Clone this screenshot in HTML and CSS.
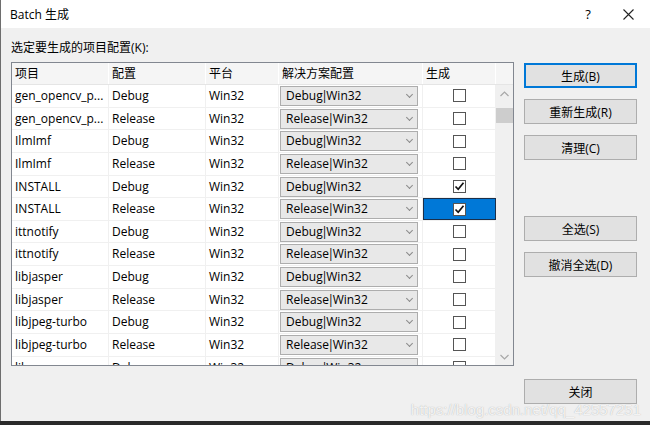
FILE: index.html
```html
<!DOCTYPE html>
<html>
<head>
<meta charset="utf-8">
<link rel="stylesheet" href="styles.css">
</head>
<body>
<div class="window">
  <div class="titlebar">
    <span class="title">Batch 生成</span>
    <span class="help">?</span>
    <span class="close-x"><svg width="11" height="11" viewBox="0 0 11 11"><path d="M0.5 0.5 L10.5 10.5 M10.5 0.5 L0.5 10.5" stroke="#222" stroke-width="1.1" fill="none"/></svg></span>
  </div>
  <div class="content">
    <div class="left">
      <div class="label">选定要生成的项目配置(K):</div>
      <div class="grid">
        <div class="hrow">
          <div class="hcell">项目</div>
          <div class="hcell">配置</div>
          <div class="hcell">平台</div>
          <div class="hcell">解决方案配置</div>
          <div class="hcell">生成</div>
          <div class="hcell blank"></div>
        </div>
        <div class="gbody">
          <div class="rows">
            <div class="row"><div class="cell">gen_opencv_p...</div><div class="cell">Debug</div><div class="cell">Win32</div><div class="cell cc"><div class="combo"><span>Debug<b class="pipe">|</b>Win32</span><i class="chev"></i></div></div><div class="cell ck"><span class="box"></span></div></div>
            <div class="row"><div class="cell">gen_opencv_p...</div><div class="cell">Release</div><div class="cell">Win32</div><div class="cell cc"><div class="combo"><span>Release<b class="pipe">|</b>Win32</span><i class="chev"></i></div></div><div class="cell ck"><span class="box"></span></div></div>
            <div class="row"><div class="cell">IlmImf</div><div class="cell">Debug</div><div class="cell">Win32</div><div class="cell cc"><div class="combo"><span>Debug<b class="pipe">|</b>Win32</span><i class="chev"></i></div></div><div class="cell ck"><span class="box"></span></div></div>
            <div class="row"><div class="cell">IlmImf</div><div class="cell">Release</div><div class="cell">Win32</div><div class="cell cc"><div class="combo"><span>Release<b class="pipe">|</b>Win32</span><i class="chev"></i></div></div><div class="cell ck"><span class="box"></span></div></div>
            <div class="row"><div class="cell">INSTALL</div><div class="cell">Debug</div><div class="cell">Win32</div><div class="cell cc"><div class="combo"><span>Debug<b class="pipe">|</b>Win32</span><i class="chev"></i></div></div><div class="cell ck"><span class="box checked"><svg width="11" height="11" viewBox="0 0 11 11"><path d="M1.5 5.5 L4.2 8.3 L9.5 1.8" stroke="#111" stroke-width="1.7" fill="none"/></svg></span></div></div>
            <div class="row"><div class="cell">INSTALL</div><div class="cell">Release</div><div class="cell">Win32</div><div class="cell cc"><div class="combo"><span>Release<b class="pipe">|</b>Win32</span><i class="chev"></i></div></div><div class="cell ck sel"><span class="box checked"><svg width="11" height="11" viewBox="0 0 11 11"><path d="M1.5 5.5 L4.2 8.3 L9.5 1.8" stroke="#111" stroke-width="1.7" fill="none"/></svg></span></div></div>
            <div class="row"><div class="cell">ittnotify</div><div class="cell">Debug</div><div class="cell">Win32</div><div class="cell cc"><div class="combo"><span>Debug<b class="pipe">|</b>Win32</span><i class="chev"></i></div></div><div class="cell ck"><span class="box"></span></div></div>
            <div class="row"><div class="cell">ittnotify</div><div class="cell">Release</div><div class="cell">Win32</div><div class="cell cc"><div class="combo"><span>Release<b class="pipe">|</b>Win32</span><i class="chev"></i></div></div><div class="cell ck"><span class="box"></span></div></div>
            <div class="row"><div class="cell">libjasper</div><div class="cell">Debug</div><div class="cell">Win32</div><div class="cell cc"><div class="combo"><span>Debug<b class="pipe">|</b>Win32</span><i class="chev"></i></div></div><div class="cell ck"><span class="box"></span></div></div>
            <div class="row"><div class="cell">libjasper</div><div class="cell">Release</div><div class="cell">Win32</div><div class="cell cc"><div class="combo"><span>Release<b class="pipe">|</b>Win32</span><i class="chev"></i></div></div><div class="cell ck"><span class="box"></span></div></div>
            <div class="row"><div class="cell">libjpeg-turbo</div><div class="cell">Debug</div><div class="cell">Win32</div><div class="cell cc"><div class="combo"><span>Debug<b class="pipe">|</b>Win32</span><i class="chev"></i></div></div><div class="cell ck"><span class="box"></span></div></div>
            <div class="row"><div class="cell">libjpeg-turbo</div><div class="cell">Release</div><div class="cell">Win32</div><div class="cell cc"><div class="combo"><span>Release<b class="pipe">|</b>Win32</span><i class="chev"></i></div></div><div class="cell ck"><span class="box"></span></div></div>
            <div class="row"><div class="cell">libpng</div><div class="cell">Debug</div><div class="cell">Win32</div><div class="cell cc"><div class="combo"><span>Debug<b class="pipe">|</b>Win32</span><i class="chev"></i></div></div><div class="cell ck"><span class="box"></span></div></div>
          </div>
          <div class="scrollbar">
            <div class="sb-arrow"><svg width="9" height="6" viewBox="0 0 9 6"><path d="M0.5 5 L4.5 1 L8.5 5" stroke="#a8a8a8" stroke-width="1.2" fill="none"/></svg></div>
            <div class="sb-thumb"></div>
            <div class="sb-track"></div>
            <div class="sb-arrow"><svg width="9" height="6" viewBox="0 0 9 6"><path d="M0.5 1 L4.5 5 L8.5 1" stroke="#a8a8a8" stroke-width="1.2" fill="none"/></svg></div>
          </div>
        </div>
      </div>
    </div>
    <div class="buttons">
      <div class="btn default">生成(B)</div>
      <div class="btn">重新生成(R)</div>
      <div class="btn">清理(C)</div>
      <div class="btn gap-top">全选(S)</div>
      <div class="btn">撤消全选(D)</div>
    </div>
  </div>
  <div class="footer">
    <div class="btn">关闭</div>
  </div>
  <div class="watermark">https://blog.csdn.net/qq_42557251</div>
  <div class="bottom-strip"></div>
</div>
</body>
</html>
```

FILE: styles.css
```css
* { box-sizing: border-box; }
html, body { margin: 0; padding: 0; }
body {
  width: 650px;
  height: 425px;
  overflow: hidden;
  font-family: "Open Sans", "Noto Sans CJK SC", sans-serif;
  font-size: 12px;
  color: #000;
  background: #f0f0f0;
}
.window {
  position: relative;
  width: 650px;
  height: 425px;
  background: #f0f0f0;
  border-left: 1px solid #6e6e6e;
  display: flex;
  flex-direction: column;
}
.titlebar {
  height: 28px;
  background: #fff;
  display: flex;
  align-items: center;
  padding-left: 9px;
  flex: none;
}
.title { flex: 1; font-size: 12px; }
.help { width: 20px; text-align: center; margin-right: 20px; font-size: 13px; }
.close-x { width: 20px; display: flex; justify-content: center; margin-right: 12px; }

.content {
  display: flex;
  padding-left: 10px;
  flex: none;
}
.left { width: 503px; }
.label {
  margin-top: 12px;
  height: 22px;
  line-height: 15px;
}
.grid {
  border: 1px solid #828790;
  background: #fff;
  height: 304px;
  display: flex;
  flex-direction: column;
}
.hrow {
  display: grid;
  grid-template-columns: 97px 97px 73px 144px 73px 17px;
  height: 22px;
  background: #f5f5f5;
  border-bottom: 1px solid #e5e5e5;
  flex: none;
}
.hcell {
  padding-left: 3px;
  line-height: 21px;
  border-right: 1px solid #fff;
}
.hcell.blank { border-right: none; }
.gbody {
  display: flex;
  flex: 1;
  overflow: hidden;
}
.rows { width: 484px; overflow: hidden; }
.row {
  display: grid;
  grid-template-columns: 97px 97px 73px 144px 73px;
  height: 22.65px;
  border-bottom: 1px solid #f0f0f0;
}
.cell {
  padding-left: 3px;
  line-height: 21px;
  border-right: 1px solid #f0f0f0;
  white-space: nowrap;
  overflow: hidden;
}
.cell.cc { padding: 1px 4px 0 1px; }
.combo {
  height: 20px;
  background: #e8e8e8;
  border: 1px solid #adadad;
  display: flex;
  align-items: center;
  justify-content: space-between;
  padding: 0 5px 0 5px;
  line-height: 18px;
}
.pipe { font-weight: normal; margin: 0 -1.5px; }
.chev {
  width: 5px; height: 5px;
  border-right: 1px solid #8a8a8a;
  border-bottom: 1px solid #8a8a8a;
  transform: rotate(45deg);
  margin-top: -3px;
}
.cell.ck {
  display: flex;
  align-items: center;
  justify-content: center;
  padding-left: 0;
}
.cell.ck.sel {
  background: #0078d7;
  border: 1px solid #1b2f4a;
}
.box {
  width: 13px; height: 13px;
  border: 1px solid #555;
  background: #fff;
  display: flex;
  align-items: center;
  justify-content: center;
}
.scrollbar {
  width: 17px;
  background: #f0f0f0;
  display: flex;
  flex-direction: column;
}
.sb-arrow { height: 17px; display: flex; align-items: center; justify-content: center; }
.sb-thumb { height: 15px; margin-top: 6px; background: #cdcdcd; }
.sb-track { flex: 1; }

.buttons {
  margin-left: 10px;
  margin-top: 35px;
  width: 113px;
  display: flex;
  flex-direction: column;
  gap: 11px;
}
.btn {
  width: 113px;
  height: 25px;
  border: 1px solid #adadad;
  background: #e1e1e1;
  display: flex;
  align-items: center;
  justify-content: center;
}
.btn.default { border: 2px solid #0078d7; }
.btn.gap-top { margin-top: 45px; }
.footer {
  display: flex;
  justify-content: flex-end;
  padding-right: 13px;
  margin-top: 13px;
}
.watermark {
  position: absolute;
  right: 9px;
  bottom: 7px;
  font-family: "Liberation Sans", sans-serif;
  font-size: 15px;
  color: rgba(255,255,255,0.85);
  text-shadow: 0 0 1px rgba(120,120,120,0.6);
}
.bottom-strip {
  position: absolute;
  left: -1px;
  right: 0;
  bottom: 0;
  height: 4px;
  background: #2a2a2a;
}
```
